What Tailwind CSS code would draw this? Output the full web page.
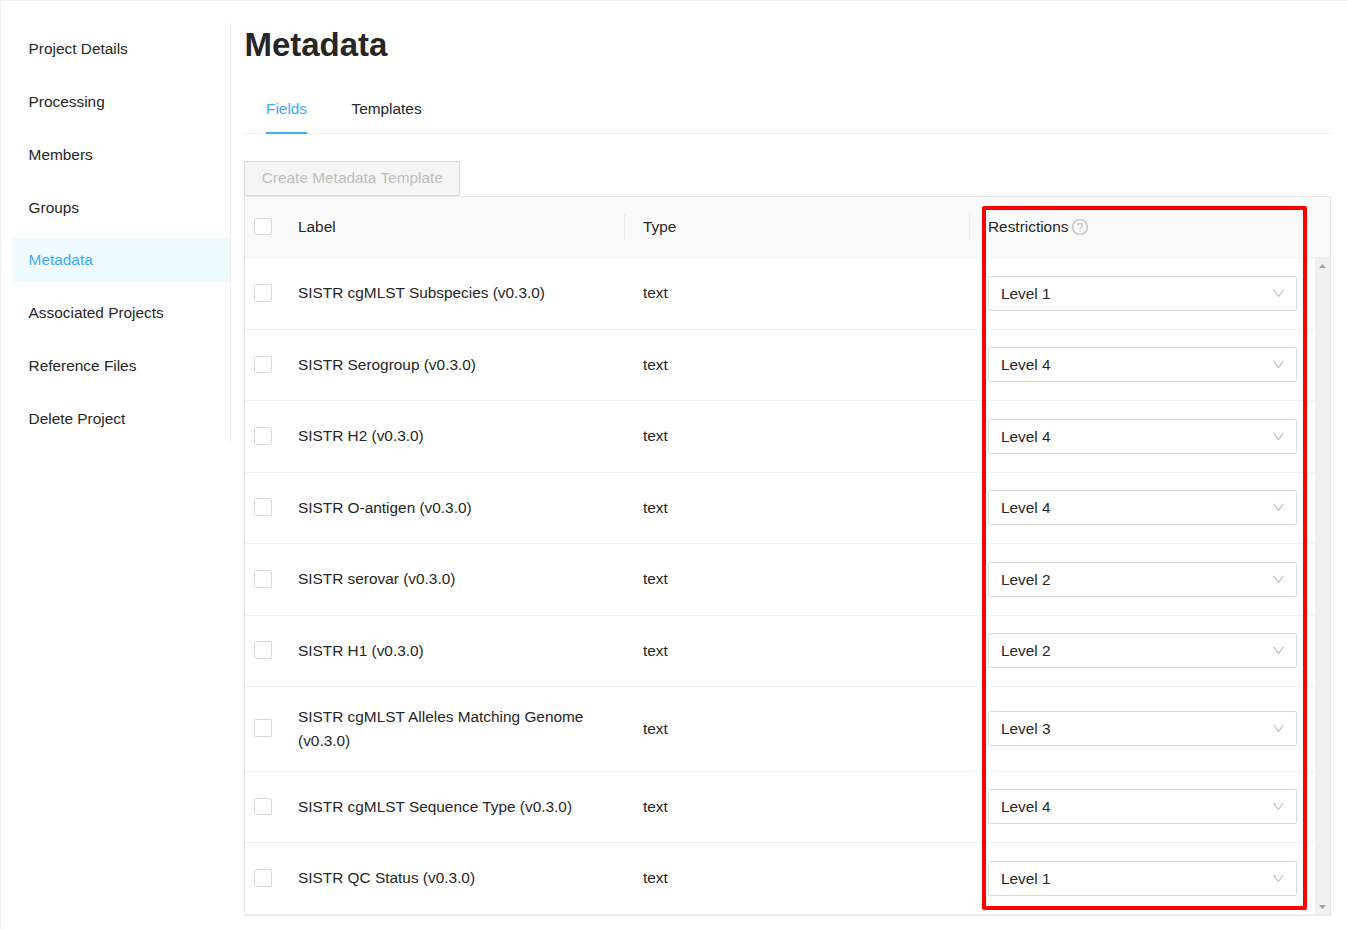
<!DOCTYPE html>
<html lang="en">
<head>
<meta charset="utf-8">
<title>Metadata</title>
<script src="https://cdn.jsdelivr.net/npm/@tailwindcss/browser@4"></script>
</head>
<body class="h-[929px] overflow-hidden bg-white font-['Liberation_Sans',Arial,sans-serif] text-[15.4px] leading-6 text-[#262626]">
<div class="relative flex h-[929px] w-[1347px] border-t border-l border-[#f0f0f0] pl-[10px] pt-[22px]">
  <nav class="flex h-[422px] w-[220px] shrink-0 flex-col gap-[8.8px] border-r border-[#f0f0f0] pt-[4.2px] leading-[44px]">
    <a class="h-[44px] pl-[17.6px]">Project Details</a>
    <a class="h-[44px] pl-[17.6px]">Processing</a>
    <a class="h-[44px] pl-[17.6px]">Members</a>
    <a class="h-[44px] pl-[17.6px]">Groups</a>
    <a class="h-[44px] bg-[#f0fbff] pl-[17.6px] text-[#40a9ff]">Metadata</a>
    <a class="h-[44px] pl-[17.6px]">Associated Projects</a>
    <a class="h-[44px] pl-[17.6px]">Reference Files</a>
    <a class="h-[44px] pl-[17.6px]">Delete Project</a>
  </nav>
  <main class="ml-[13px] flex w-[1087px] flex-col items-start">
    <h1 class="h-[62px] pl-[0.4px] text-[33px] font-bold leading-[44px]">Metadata</h1>
    <div class="flex h-[49px] w-full gap-[44.4px] border-b border-[#f0f0f0] pl-[22px]">
      <div class="h-[49px] border-b-2 border-[#40a9ff] text-[#40a9ff] leading-[48px]">Fields</div>
      <div class="leading-[48px]">Templates</div>
    </div>
    <button class="mt-[27px] h-[35px] w-[216px] rounded-[2px] border border-[#d9d9d9] bg-[#f5f5f5] pb-[2px] pl-[0.6px] text-[#bfbfbf]">Create Metadata Template</button>
    <section class="flex w-full flex-col rounded-t-[2px] border border-[#e8e8e8]">
      <div class="grid h-[61px] grid-cols-[53px_345px_345px_1fr] items-center border-b border-[#f0f0f0] bg-[#fafafa]">
        <span class="mb-[2px] ml-[9px] block h-[17px] w-[18px] rounded-[2px] border border-[#d9d9d9] bg-white"></span>
        <div class="mr-[18px] flex h-[26px] items-center border-r border-[#ececec]">Label</div>
        <div class="mr-[18px] flex h-[26px] items-center border-r border-[#ececec]">Type</div>
        <div class="flex items-center gap-1">Restrictions
          <svg class="mb-px size-4" viewBox="64 64 896 896" fill="#bfbfbf"><path d="M512 64C264.600 64 64 264.600 64 512s200.600 448 448 448 448-200.600 448-448S759.400 64 512 64zm0 820c-205.400 0-372-166.600-372-372s166.600-372 372-372 372 166.600 372 372-166.600 372-372 372z"/><path d="M623.600 316.700C593.600 290.400 554 276 512 276s-81.600 14.500-111.600 40.700C369.200 344 352 380.700 352 420v7.600c0 4.400 3.600 8 8 8h48c4.400 0 8-3.600 8-8V420c0-44.100 43.100-80 96-80s96 35.900 96 80c0 31.100-22 59.600-56.100 72.700-21.200 8.100-39.200 22.300-52.100 40.900-13.100 19-19.900 41.800-19.900 64.900V620c0 4.400 3.600 8 8 8h48c4.400 0 8-3.600 8-8v-22.700a48.300 48.300 0 0 1 30.900-44.800c59-22.700 97.100-74.700 97.100-132.500.1-39.300-17.100-76-48.300-103.300zM472 732a40 40 0 1 0 80 0 40 40 0 1 0-80 0z"/></svg>
        </div>
      </div>
      <div class="flex">
        <div id="rows" class="w-[1070px]"></div>
        <div class="flex w-[15px] flex-col items-center justify-between bg-[#f0f0f0] py-[6px]">
          <svg class="h-[4px] w-[7px]" viewBox="0 0 7 4" fill="#a3a3a3"><path d="M3.500 0L7 4H0z"/></svg>
          <svg class="h-[4px] w-[7px]" viewBox="0 0 7 4" fill="#a3a3a3"><path d="M0 0h7L3.500 4z"/></svg>
        </div>
      </div>
    </section>
  </main>
  <div class="absolute left-[981px] top-[205px] h-[704px] w-[325px] rounded-[2px] border-4 border-[#ff0000]"></div>
</div>
<script>
const tall = "h-[72px]", short = "h-[71px]", wrap = "h-[85px]";
const s18 = "mt-[18px]", s17 = "mt-[17px]", s24 = "mt-[24px]";
const c26 = "mt-[26px]", c25 = "mt-[25px]", c32 = "mt-[32px]";
const h18 = "h-[18px]", h17 = "h-[17px]";
const rows = [
  ["SISTR cgMLST Subspecies (v0.3.0)", 1, tall, s18, c26, h18],
  ["SISTR Serogroup (v0.3.0)", 4, short, s17, c26, h17],
  ["SISTR H2 (v0.3.0)", 4, tall, s18, c26, h18],
  ["SISTR O-antigen (v0.3.0)", 4, short, s17, c25, h18],
  ["SISTR serovar (v0.3.0)", 2, tall, s18, c26, h18],
  ["SISTR H1 (v0.3.0)", 2, short, s17, c25, h18],
  ["SISTR cgMLST Alleles Matching Genome (v0.3.0)", 3, wrap, s24, c32, h18],
  ["SISTR cgMLST Sequence Type (v0.3.0)", 4, short, s17, c26, h17],
  ["SISTR QC Status (v0.3.0)", 1, tall, s18, c26, h18],
];
document.getElementById("rows").innerHTML = rows.map(([label, level, h, s, c, ch]) => `
  <div class="grid grid-cols-[53px_345px_345px_1fr] items-start border-b border-[#f0f0f0] ${h}">
    <span class="ml-[9px] block w-[18px] rounded-[2px] border border-[#d9d9d9] bg-white ${c} ${ch}"></span>
    <div class="w-[310px] ${h === wrap ? "pt-[18px]" : "pt-[23px]"}">${label}</div>
    <div class="${h === wrap ? "pt-[30px]" : "pt-[23px]"}">text</div>
    <div class="mr-[18px] flex h-[35px] items-center justify-between rounded-[2px] border border-[#d9d9d9] bg-white pl-[12px] pr-[11px] ${s}">Level ${level}
      <svg class="size-[13px]" viewBox="64 64 896 896" fill="#bfbfbf"><path d="M884 256h-75c-5.100 0-9.900 2.500-12.900 6.600L512 654.200 227.900 262.600c-3-4.100-7.800-6.600-12.900-6.600h-75c-6.500 0-10.300 7.400-6.500 12.700l352.600 486.100c12.800 17.600 39 17.600 51.700 0l352.600-486.100c3.900-5.300.1-12.700-6.400-12.700z"/></svg>
    </div>
  </div>`).join("");
</script>
</body>
</html>
